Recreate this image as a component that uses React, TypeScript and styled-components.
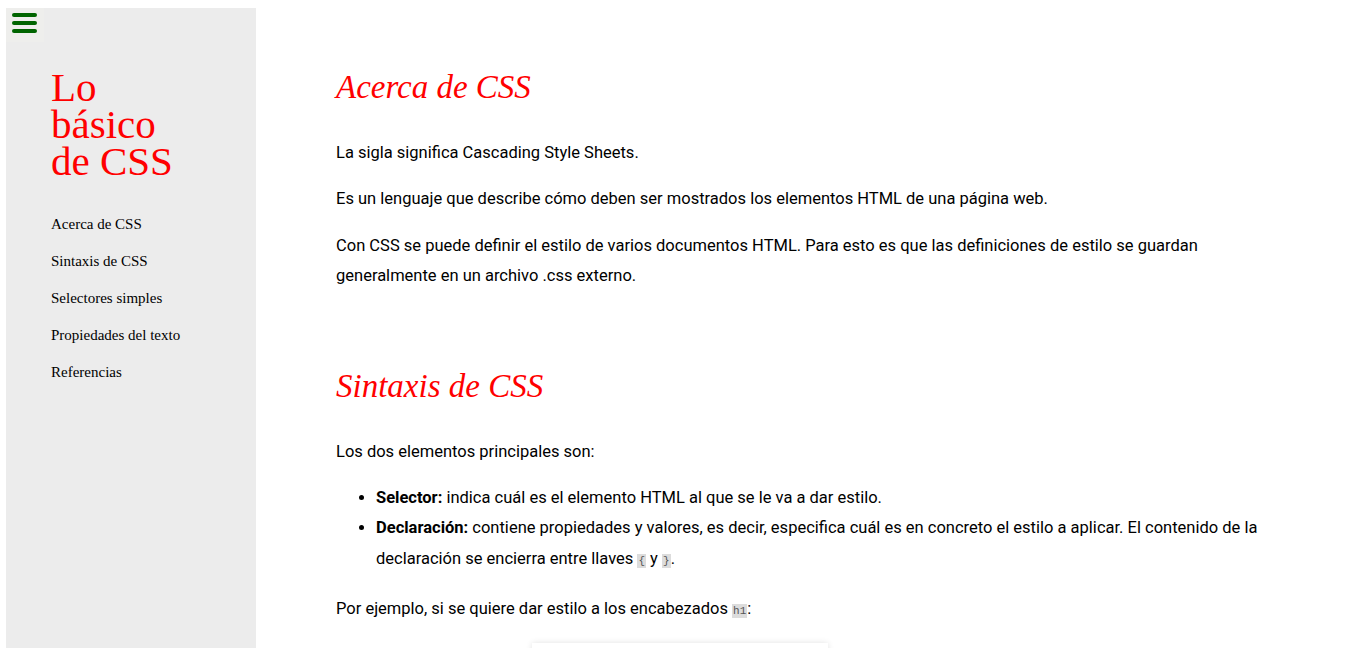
import React from "react";
import styled, { createGlobalStyle } from "styled-components";

const Global = createGlobalStyle`
  html, body { margin: 0; padding: 0; background: #ffffff; }
  body { overflow: hidden; height: 648px; }
`;

const Page = styled.div`
  display: flex;
  align-items: stretch;
  padding: 8px 0 0 6px;
  height: 648px;
  overflow: hidden;
  box-sizing: border-box;
`;

const Sidebar = styled.aside`
  position: relative;
  flex: 0 0 250px;
  width: 250px;
  background: #ececec;
  padding: 0 20px 0 45px;
  box-sizing: border-box;
`;

const MenuButton = styled.button`
  position: absolute;
  top: 0;
  left: 0;
  width: 38px;
  height: 34px;
  padding: 5px 0 0;
  border: none;
  background: #eeeeec;
  display: flex;
  flex-direction: column;
  align-items: center;
  justify-content: flex-start;
  gap: 4.5px;
  box-sizing: border-box;
  cursor: pointer;
`;

const Bar = styled.span`
  display: block;
  width: 25px;
  height: 3.5px;
  border-radius: 2px;
  background: #006400;
  margin-left: -1px;
`;

const Title = styled.h1`
  margin: 61px 0 0;
  font-family: "Liberation Serif", "Times New Roman", serif;
  font-weight: normal;
  font-size: 41px;
  line-height: 37px;
  color: #ff0000;
`;

const Nav = styled.ul`
  list-style: none;
  margin: 26px 0 0;
  padding: 0;
`;

const NavItem = styled.li`
  font-family: "Liberation Serif", "Times New Roman", serif;
  font-size: 15px;
  line-height: 37px;
  color: #000;
`;

const Main = styled.main`
  flex: 1;
  padding: 1px 80px 0;
  font-family: Roboto, "Liberation Sans", sans-serif;
  font-size: 16.5px;
  line-height: 30.4px;
  color: #000;
`;

const Section = styled.section`
  padding-top: 60px;
`;

const Heading = styled.h2`
  margin: 0 0 33px;
  font-family: "Liberation Serif", "Times New Roman", serif;
  font-style: italic;
  font-weight: normal;
  font-size: 33px;
  line-height: 36px;
  color: #ff0000;
`;

const Para = styled.p`
  margin: 0 0 16px;
`;

const List = styled.ul`
  margin: 0 0 18px;
  padding-left: 40px;
`;

const Code = styled.code`
  font-family: "Liberation Mono", "DejaVu Sans Mono", monospace;
  font-size: 11px;
  background: #dcdcdc;
  padding: 1px 1px;
  color: #555;
`;

const CodeBlock = styled.pre`
  margin: 12px 0 0 196px;
  width: 296px;
  height: 120px;
  background: #ffffff;
  box-shadow: 0 0 6px rgba(0, 0, 0, 0.12);
`;

export default function App() {
  const links = [
    "Acerca de CSS",
    "Sintaxis de CSS",
    "Selectores simples",
    "Propiedades del texto",
    "Referencias",
  ];
  return (
    <>
      <Global />
      <Page>
        <Sidebar>
          <MenuButton aria-label="menú">
            <Bar />
            <Bar />
            <Bar />
          </MenuButton>
          <Title>
            Lo
            <br />
            básico
            <br />
            de CSS
          </Title>
          <Nav>
            {links.map((l) => (
              <NavItem key={l}>{l}</NavItem>
            ))}
          </Nav>
        </Sidebar>
        <Main>
          <Section>
            <Heading>Acerca de CSS</Heading>
            <Para>La sigla significa Cascading Style Sheets.</Para>
            <Para>
              Es un lenguaje que describe cómo deben ser mostrados los elementos HTML de una página web.
            </Para>
            <Para>
              Con CSS se puede definir el estilo de varios documentos HTML. Para esto es que las
              definiciones de estilo se guardan generalmente en un archivo .css externo.
            </Para>
          </Section>
          <Section>
            <Heading>Sintaxis de CSS</Heading>
            <Para>Los dos elementos principales son:</Para>
            <List>
              <li>
                <b>Selector:</b> indica cuál es el elemento HTML al que se le va a dar estilo.
              </li>
              <li>
                <b>Declaración:</b> contiene propiedades y valores, es decir, especifica cuál es en
                concreto el estilo a aplicar. El contenido de la declaración se encierra entre llaves{" "}
                <Code>{"{"}</Code> y <Code>{"}"}</Code>.
              </li>
            </List>
            <Para>
              Por ejemplo, si se quiere dar estilo a los encabezados <Code>h1</Code>:
            </Para>
            <CodeBlock />
          </Section>
        </Main>
      </Page>
    </>
  );
}
